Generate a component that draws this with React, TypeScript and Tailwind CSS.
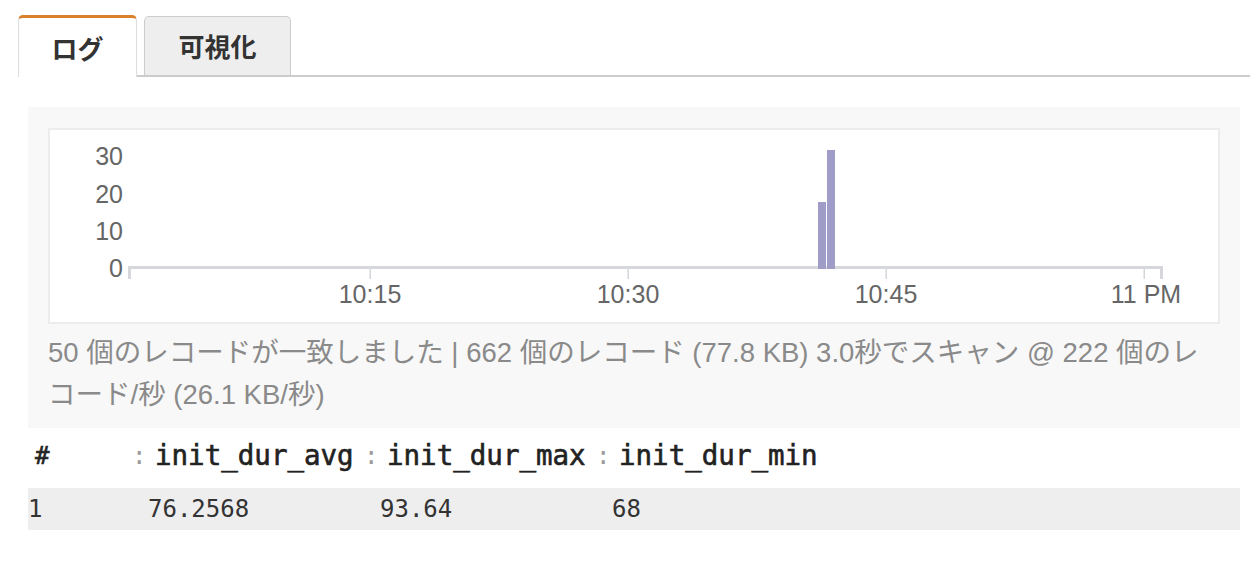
import React from "react";

const ticks = [
  { x: 370, label: "10:15" },
  { x: 628, label: "10:30" },
  { x: 886, label: "10:45" },
  { x: 1144, label: "11 PM" },
];

const yLabels = [
  { y: 165, label: "30" },
  { y: 203, label: "20" },
  { y: 240, label: "10" },
  { y: 277, label: "0" },
];

function Chart() {
  return (
    <svg
      width={1168}
      height={192}
      viewBox="50 130 1168 192"
      className="block font-['Liberation_Sans',sans-serif]"
    >
      {yLabels.map((l) => (
        <text key={l.label} x={123} y={l.y} textAnchor="end" fontSize={25} fill="#666">
          {l.label}
        </text>
      ))}
      <rect x={128} y={266} width={1035} height={3} fill="#d5d7da" />
      <rect x={128} y={266} width={3} height={13} fill="#d5d7da" />
      <rect x={1160} y={266} width={3} height={13} fill="#d5d7da" />
      {ticks.map((t) => (
        <g key={t.label}>
          <rect x={t.x - 0.5} y={269} width={1.5} height={10} fill="#d3d6da" />
          <text x={t.label === "11 PM" ? 1146 : t.x} y={303} textAnchor="middle" fontSize={25} fill="#666">
            {t.label}
          </text>
        </g>
      ))}
      <rect x={818} y={202} width={8} height={67} fill="#a09cc8" />
      <rect x={827} y={150} width={8} height={119} fill="#a09cc8" />
    </svg>
  );
}

function Sep() {
  return (
    <span className="w-[25px] text-[24px] text-[#9a9a9a] pl-[2px] font-normal [-webkit-text-stroke:0px_transparent]">
      :
    </span>
  );
}

export default function App() {
  return (
    <div className="w-[1250px] h-[570px] bg-white overflow-hidden font-['Liberation_Sans','Noto_Sans_CJK_JP',sans-serif]">
      {/* Tabs */}
      <div className="flex items-end pt-[15px] pl-[18px]">
        <div className="w-[119px] h-[62px] bg-white border-t-[3px] border-t-[#d9822b] border-x border-x-[#dddddd] rounded-t-[5px] flex items-center justify-center">
          <span className="text-[26px] font-bold text-[#333] font-['Noto_Sans_CJK_JP',sans-serif] leading-none">ログ</span>
        </div>
        <div className="flex-1 border-b-2 border-[#cccccc] flex items-end">
          <div className="ml-[7px] w-[147px] h-[59px] bg-[#eeeeee] border border-[#cccccc] border-b-0 rounded-t-[5px] flex items-center justify-center">
            <span className="text-[26px] font-bold text-[#333] font-['Noto_Sans_CJK_JP',sans-serif] leading-none">可視化</span>
          </div>
        </div>
      </div>

      {/* Panel */}
      <div className="mt-[30px] ml-[28px] w-[1212px] bg-[#f8f8f8] pt-[21px] px-[20px] pb-[12px]">
        <div className="h-[196px] border-2 border-[#ececec] bg-white">
          <Chart />
        </div>
        <div className="mt-[8px] text-[27.5px] leading-[42px] text-[#8a8a8a]">
          50 個のレコードが一致しました | 662 個のレコード (77.8 KB) 3.0秒でスキャン @ 222 個のレコード/秒 (26.1 KB/秒)
        </div>
      </div>

      {/* Table */}
      <div className="ml-[28px] w-[1212px] font-['DejaVu_Sans_Mono',monospace]">
        <div className="flex h-[60px] items-center pb-[4px] text-[#222]">
          <div className="w-[102px] pl-[7px] text-[24px] [-webkit-text-stroke:0.6px_#222]">#</div>
          <div className="w-[232px] flex items-center">
            <Sep />
            <span className="text-[27.5px] [-webkit-text-stroke:0.6px_#222]">init_dur_avg</span>
          </div>
          <div className="w-[232px] flex items-center">
            <Sep />
            <span className="text-[27.5px] [-webkit-text-stroke:0.6px_#222]">init_dur_max</span>
          </div>
          <div className="flex items-center">
            <Sep />
            <span className="text-[27.5px] [-webkit-text-stroke:0.6px_#222]">init_dur_min</span>
          </div>
        </div>
        <div className="flex h-[42px] items-center bg-[#eeeeee] text-[24px] text-[#333]">
          <div className="w-[102px]">1</div>
          <div className="w-[232px] pl-[18px]">76.2568</div>
          <div className="w-[232px] pl-[18px]">93.64</div>
          <div className="pl-[18px]">68</div>
        </div>
      </div>
    </div>
  );
}
